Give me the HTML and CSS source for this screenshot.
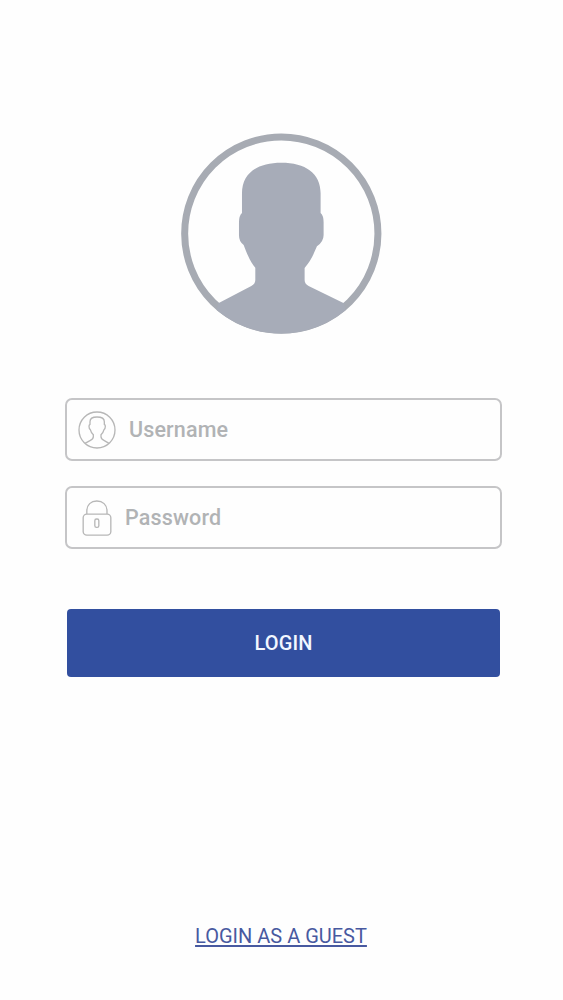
FILE: index.html
```html
<!DOCTYPE html>
<html lang="en">
<head>
<meta charset="utf-8">
<title>Login</title>
<link rel="stylesheet" href="styles.css">
</head>
<body>
<main class="screen">
  <svg class="avatar" viewBox="0 0 602 604" aria-hidden="true">
    <circle cx="301" cy="302" r="290" fill="none" stroke="#a7abb3" stroke-width="21"/>
    <path fill="#a7acb8" d="M112 511 L211 459 Q223 453 223 441 V404 Q210 391 195 354 L188 336 Q174 326 174 307 V268 Q174 248 183 240 V181 C183 120 229 89 301 89 C373 89 419 120 419 181 V240 Q428 248 428 268 V306 Q428 326 408 340 L399 360 Q391 381 371 405 V441 Q371 453 383 459 L489 511 L494 531 A300 300 0 0 1 107 531 Z"/>
  </svg>
  <form class="form">
    <label class="field">
      <svg class="icon user-icon" viewBox="0 0 114 114" aria-hidden="true">
        <circle cx="57" cy="57" r="54"/>
        <path d="M21 97 L36 89 Q46 84 46 77 V71 Q39 65 37 56 Q33 53 33 46 Q33 42 36 40 V32 C36 22 44 18 57 18 C70 18 79 22 79 32 V40 Q82 42 82 46 Q82 53 78 56 Q76 65 69 71 V77 Q69 84 79 89 L93 97"/>
      </svg>
      <input class="input" type="text" placeholder="Username">
    </label>
    <label class="field field-password">
      <svg class="icon lock-icon" viewBox="0 0 90 108" aria-hidden="true">
        <rect x="3.500" y="42.500" width="83" height="63" rx="11"/>
        <path d="M14.500 42 V33 C14.500 14 27 3 44.500 3 C62 3 75 14 75 33 V42"/>
        <rect x="38.500" y="57" width="12" height="25" rx="5"/>
      </svg>
      <input class="input" type="password" placeholder="Password">
    </label>
    <button class="login" type="button">LOGIN</button>
  </form>
  <a class="guest" href="#">LOGIN AS A GUEST</a>
</main>
</body>
</html>
```
FILE: styles.css
```css
* { box-sizing: border-box; }
body {
  margin: 0;
  background: #fefefe;
  font-family: Roboto, "Liberation Sans", sans-serif;
}
.screen {
  display: flex;
  flex-direction: column;
  align-items: center;
  height: 1000px;
  padding: 133px 0 51px;
}
.avatar { width: 200.600px; height: 201.300px; flex: none; }
.form {
  display: flex;
  flex-direction: column;
  align-items: center;
  width: 437px;
  margin: 64px 0 0 4px;
}
.field {
  display: flex;
  align-items: center;
  width: 437px;
  height: 63px;
  margin-bottom: 25px;
  padding-left: 11px;
  border: 2px solid #c5c5c7;
  border-radius: 7px;
}
.field-password { padding-left: 15px; }
.icon { flex: none; fill: none; stroke: #b7b7b7; stroke-width: 4; }
.user-icon { width: 38px; height: 38px; }
.lock-icon { width: 30px; height: 36px; }
.input {
  flex: 1;
  min-width: 0;
  height: 40px;
  margin-left: 13px;
  padding: 0;
  border: 0;
  outline: 0;
  background: transparent;
  font: 500 21.500px/40px Roboto, sans-serif;
  letter-spacing: 0.150px;
}
.input::placeholder { color: #b1b3b5; opacity: 1; }
.login {
  width: 433px;
  height: 68px;
  margin-top: 35px;
  padding: 0;
  border: 0;
  border-radius: 4px;
  background: #324f9f;
  color: #f2f7ff;
  font: 500 20px/68px Roboto, sans-serif;
  letter-spacing: 0.100px;
}
.guest {
  margin-top: auto;
  margin-right: 1px;
  color: #4859a0;
  font-size: 20px;
  line-height: 26px;
  text-decoration: underline;
  text-decoration-thickness: 1.500px;
  text-underline-offset: 2px;
}
```
